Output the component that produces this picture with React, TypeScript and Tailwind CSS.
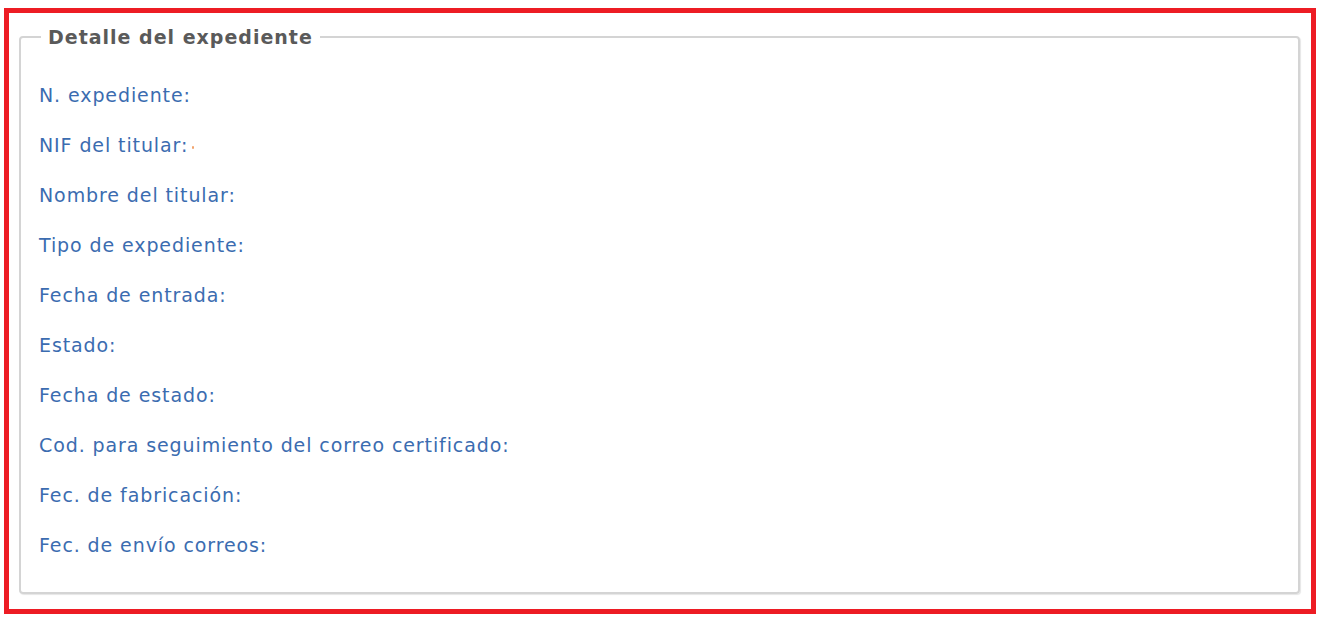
import React from 'react';

const FIELDS = [
  'N. expediente:',
  'NIF del titular:',
  'Nombre del titular:',
  'Tipo de expediente:',
  'Fecha de entrada:',
  'Estado:',
  'Fecha de estado:',
  'Cod. para seguimiento del correo certificado:',
  'Fec. de fabricación:',
  'Fec. de envío correos:',
];

const App: React.FC = () => {
  return (
    <div className="w-[1323px] h-[618px] bg-white pt-[8px] pl-[4px]" style={{ fontFamily: '"DejaVu Sans", Verdana, sans-serif' }}>
      <div className="w-[1312px] h-[606px] border-[5px] border-[#ed1c24] pt-[12px] pl-[10px]">
        <fieldset className="w-[1281px] h-[569px] border-2 border-[#d4d4d4] rounded-[4px] pl-[18px] pt-[34px] shadow-[1px_1px_1px_#e6e6e6]">
          <legend className="ml-[2px] px-[7px] text-[19px] tracking-[1px] font-bold text-[#5a5a5a] leading-[24px]">
            Detalle del expediente
          </legend>
          <div className="flex flex-col">
            {FIELDS.map((f, i) => (
              <div key={f} className="h-[50px] flex items-start text-[19px] tracking-[0.9px] text-[#3b6cb0] leading-[24px]">
                <span>{f}</span>
                {i === 1 && <span className="ml-[4px] mt-[13px] w-[2px] h-[3px] rounded-full bg-[#f2a46e]" />}
              </div>
            ))}
          </div>
        </fieldset>
      </div>
    </div>
  );
};

export default App;
